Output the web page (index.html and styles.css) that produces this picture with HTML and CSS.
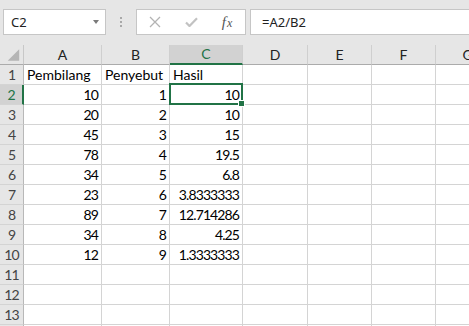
FILE: index.html
```html
<!DOCTYPE html>
<html>
<head>
<meta charset="utf-8">
<link rel="stylesheet" href="styles.css">
</head>
<body>
<div class="app">
  <div class="toolbar">
    <div class="namebox"><span>C2</span><span class="caret"></span></div>
    <div class="grip"><i></i><i></i><i></i></div>
    <div class="fnbtns">
      <span class="slot"><svg width="12" height="12" viewBox="0 0 12 12"><path d="M1 1 L11 11 M11 1 L1 11" stroke="#b3b3b3" stroke-width="1.3" fill="none"/></svg></span>
      <span class="slot"><svg width="13" height="10" viewBox="0 0 13 10"><path d="M1 5.5 L4.5 9 L12 1.2" stroke="#c2c2c2" stroke-width="2.2" fill="none"/></svg></span>
      <span class="slot fx"><i>f</i><i class="x">x</i></span>
    </div>
    <div class="formula">=A2/B2</div>
  </div>
  <div class="sheet">
    <div class="c corner"><svg width="24" height="19" viewBox="0 0 24 19"><polygon points="20,4 20,16 8,16" fill="#b5b5b5"/></svg></div>
    <div class="c h">A</div><div class="c h">B</div><div class="c h sel">C</div><div class="c h">D</div><div class="c h">E</div><div class="c h">F</div><div class="c h">G</div>

    <div class="c rh">1</div><div class="c">Pembilang</div><div class="c">Penyebut</div><div class="c">Hasil</div><div class="c"></div><div class="c"></div><div class="c"></div><div class="c"></div>
    <div class="c rh rsel">2</div><div class="c r">10</div><div class="c r">1</div><div class="c r active">10<span class="frame"></span><span class="handle"></span></div><div class="c"></div><div class="c"></div><div class="c"></div><div class="c"></div>
    <div class="c rh">3</div><div class="c r">20</div><div class="c r">2</div><div class="c r">10</div><div class="c"></div><div class="c"></div><div class="c"></div><div class="c"></div>
    <div class="c rh">4</div><div class="c r">45</div><div class="c r">3</div><div class="c r">15</div><div class="c"></div><div class="c"></div><div class="c"></div><div class="c"></div>
    <div class="c rh">5</div><div class="c r">78</div><div class="c r">4</div><div class="c r">19.5</div><div class="c"></div><div class="c"></div><div class="c"></div><div class="c"></div>
    <div class="c rh">6</div><div class="c r">34</div><div class="c r">5</div><div class="c r">6.8</div><div class="c"></div><div class="c"></div><div class="c"></div><div class="c"></div>
    <div class="c rh">7</div><div class="c r">23</div><div class="c r">6</div><div class="c r">3.8333333</div><div class="c"></div><div class="c"></div><div class="c"></div><div class="c"></div>
    <div class="c rh">8</div><div class="c r">89</div><div class="c r">7</div><div class="c r">12.714286</div><div class="c"></div><div class="c"></div><div class="c"></div><div class="c"></div>
    <div class="c rh">9</div><div class="c r">34</div><div class="c r">8</div><div class="c r">4.25</div><div class="c"></div><div class="c"></div><div class="c"></div><div class="c"></div>
    <div class="c rh">10</div><div class="c r">12</div><div class="c r">9</div><div class="c r">1.3333333</div><div class="c"></div><div class="c"></div><div class="c"></div><div class="c"></div>
    <div class="c rh">11</div><div class="c"></div><div class="c"></div><div class="c"></div><div class="c"></div><div class="c"></div><div class="c"></div><div class="c"></div>
    <div class="c rh">12</div><div class="c"></div><div class="c"></div><div class="c"></div><div class="c"></div><div class="c"></div><div class="c"></div><div class="c"></div>
    <div class="c rh">13</div><div class="c"></div><div class="c"></div><div class="c"></div><div class="c"></div><div class="c"></div><div class="c"></div><div class="c"></div>
    <div class="c rh"></div><div class="c"></div><div class="c"></div><div class="c"></div><div class="c"></div><div class="c"></div><div class="c"></div><div class="c"></div>
  </div>
</div>
</body>
</html>
```

FILE: styles.css
```css
html, body {
  margin: 0;
  padding: 0;
}
body {
  width: 469px;
  height: 326px;
  overflow: hidden;
  background: #ffffff;
  font-family: Lato, "Liberation Sans", sans-serif;
}
.app {
  width: 469px;
  height: 326px;
  overflow: hidden;
}
.toolbar {
  height: 45px;
  box-sizing: border-box;
  background: #e6e6e6;
  display: flex;
  align-items: flex-start;
  padding: 9px 0 0 3px;
}
.namebox {
  width: 103px;
  height: 26px;
  box-sizing: border-box;
  border: 1px solid #c6c6c6;
  background: #fff;
  display: flex;
  align-items: center;
  justify-content: space-between;
  padding: 0 6px 0 7px;
  font-family: "Noto Sans", sans-serif;
  font-size: 13px;
  color: #222;
}
.caret {
  width: 0;
  height: 0;
  border-left: 3.5px solid transparent;
  border-right: 3.5px solid transparent;
  border-top: 4px solid #7a7a7a;
}
.grip {
  width: 30px;
  height: 26px;
  display: flex;
  flex-direction: column;
  align-items: center;
  justify-content: center;
  gap: 2px;
}
.grip i {
  display: block;
  width: 2px;
  height: 2px;
  background: #a8a8a8;
}
.fnbtns {
  width: 110px;
  height: 26px;
  box-sizing: border-box;
  border: 1px solid #c6c6c6;
  background: #fff;
  display: flex;
  align-items: center;
}
.slot {
  width: 36px;
  height: 24px;
  display: flex;
  align-items: center;
  justify-content: center;
}
.fx {
  font-family: "Liberation Serif", serif;
  font-style: italic;
  font-size: 15px;
  color: #555;
}
.fx i {
  font-style: italic;
}
.fx .x {
  font-size: 12px;
  margin-left: 1px;
  position: relative;
  top: 1px;
}
.formula {
  flex: 1;
  margin-left: 4px;
  margin-right: -4px;
  height: 26px;
  box-sizing: border-box;
  border: 1px solid #c6c6c6;
  background: #fff;
  display: flex;
  align-items: center;
  padding-left: 11px;
  font-family: "Noto Sans", sans-serif;
  font-size: 13px;
  color: #222;
}
.sheet {
  display: grid;
  grid-template-columns: 24px 78px 68px 73px 65px 64px 64px 64px;
  grid-template-rows: 20px;
  grid-auto-rows: 20px;
  width: 500px;
}
.c {
  box-sizing: border-box;
  border-right: 1px solid #d4d4d4;
  border-bottom: 1px solid #d4d4d4;
  font-size: 14px;
  line-height: 16px;
  padding: 0 2px 1px 3px;
  display: flex;
  align-items: flex-end;
  white-space: nowrap;
  color: #000;
}
.r {
  justify-content: flex-end;
  letter-spacing: -0.9px;
  padding-right: 3px;
}
.corner {
  background: #e6e6e6;
  padding: 0;
  border-right-color: #c8c8c8;
  border-bottom-color: #ababab;
}
.h {
  background: #e6e6e6;
  justify-content: center;
  align-items: center;
  padding: 0;
  border-right-color: #cfcfcf;
  border-bottom-color: #ababab;
  color: #222;
}
.h.sel {
  background: #d2d2d2;
  color: #217346;
  border-bottom: 2px solid #217346;
}
.rh {
  background: #e6e6e6;
  justify-content: center;
  padding: 0 0 1px 0;
  letter-spacing: -0.9px;
  border-right-color: #b8b8b8;
  border-bottom-color: #d4d4d4;
  color: #444;
}
.rh.rsel {
  background: #d2d2d2;
  color: #217346;
  border-right: 2px solid #217346;
}
.active {
  position: relative;
}
.frame {
  position: absolute;
  left: -1px;
  top: -2px;
  right: -1px;
  bottom: -1px;
  border: 2px solid #217346;
}
.handle {
  position: absolute;
  right: -3px;
  bottom: -3px;
  width: 5px;
  height: 5px;
  background: #217346;
  border: 1px solid #fff;
}
```
